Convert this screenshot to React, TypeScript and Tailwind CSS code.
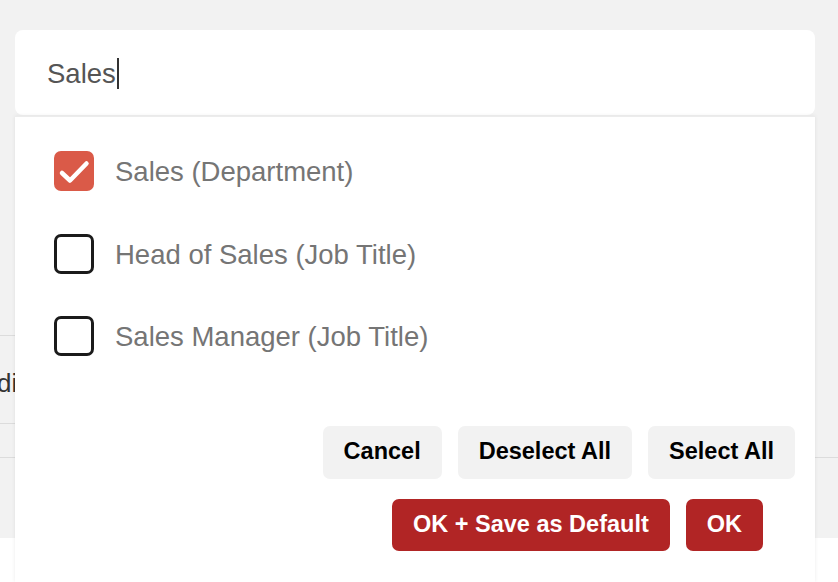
import React, { useState } from 'react';

const font = { fontFamily: '"Liberation Sans", Arial, sans-serif' };

const options = [
    { id: 'dept', label: 'Sales (Department)' },
    { id: 'head', label: 'Head of Sales (Job Title)' },
    { id: 'mgr', label: 'Sales Manager (Job Title)' },
];

const Checkbox: React.FC<{ checked: boolean }> = ({ checked }) =>
    checked ? (
        <span className="flex h-[40px] w-[40px] shrink-0 items-center justify-center rounded-[7px] bg-[#da5a48]">
            <svg width="40" height="40" viewBox="0 0 40 40" fill="none">
                <path d="M8 22 L16 29.5 L32.5 12.5" stroke="white" strokeWidth="4.5" strokeLinecap="round" strokeLinejoin="round" />
            </svg>
        </span>
    ) : (
        <span className="h-[40px] w-[40px] shrink-0 rounded-[7px] border-[3px] border-[#1b1b1b] bg-white" />
    );

const App: React.FC = () => {
    const [selected, setSelected] = useState<string[]>(['dept']);

    const toggle = (id: string) =>
        setSelected(s => (s.includes(id) ? s.filter(x => x !== id) : [...s, id]));

    return (
        <div className="relative h-[582px] w-[838px] overflow-hidden bg-[#f2f2f2]" style={font}>
            {/* Page content behind the dropdown */}
            <div className="flex h-full flex-col">
                <div className="h-[335px]" />
                <div className="flex h-[88px] w-[15px] items-center border-t border-[#dcdcdc] text-[26px] text-[#333]">
                    <span className="-ml-[3px] mt-[7px] whitespace-nowrap">di</span>
                </div>
                <div className="h-[34px] w-[15px] border-t border-[#dcdcdc]" />
                <div className="h-[81px] border-t border-[#dcdcdc]" />
                <div className="flex-1 bg-white" />
            </div>

            {/* Search + dropdown overlay */}
            <div className="absolute left-[15px] top-[30px] flex w-[800px] flex-col">
                <div className="flex h-[85px] items-center rounded-[8px] bg-white pl-[32px] pt-[2px]">
                    <span className="text-[27.5px] text-[#555]">Sales</span>
                    <span className="ml-[1px] h-[31px] w-[2px] bg-[#333]" />
                </div>
                <div className="mt-[1px] flex h-[466px] flex-col border-t border-[#ececec] bg-white shadow-[0_0_4px_rgba(0,0,0,0.08)]">
                    <div className="flex flex-col pl-[39px] pt-[34px]">
                        {options.map(o => (
                            <label
                                key={o.id}
                                onClick={() => toggle(o.id)}
                                className="flex h-[82.5px] cursor-pointer items-start gap-[21px]"
                            >
                                <Checkbox checked={selected.includes(o.id)} />
                                <span className="mt-[6px] text-[27.5px] leading-[30px] text-[#757575]">{o.label}</span>
                            </label>
                        ))}
                    </div>
                    <div className="mt-[27px] flex justify-end gap-[16px] pr-[20px]">
                        <button className="h-[53px] rounded-[7px] bg-[#f2f2f2] px-[21px] text-[23.5px] font-bold text-black">Cancel</button>
                        <button className="h-[53px] rounded-[7px] bg-[#f2f2f2] px-[21px] text-[23.5px] font-bold text-black">Deselect All</button>
                        <button className="h-[53px] rounded-[7px] bg-[#f2f2f2] px-[21px] text-[23.5px] font-bold text-black">Select All</button>
                    </div>
                    <div className="mt-[20px] flex justify-end gap-[16px] pr-[52px]">
                        <button className="h-[52px] rounded-[7px] bg-[#b12525] px-[21px] text-[23.5px] font-bold text-white">OK + Save as Default</button>
                        <button className="h-[52px] rounded-[7px] bg-[#b12525] px-[21px] text-[23.5px] font-bold text-white">OK</button>
                    </div>
                </div>
            </div>
        </div>
    );
};

export default App;
